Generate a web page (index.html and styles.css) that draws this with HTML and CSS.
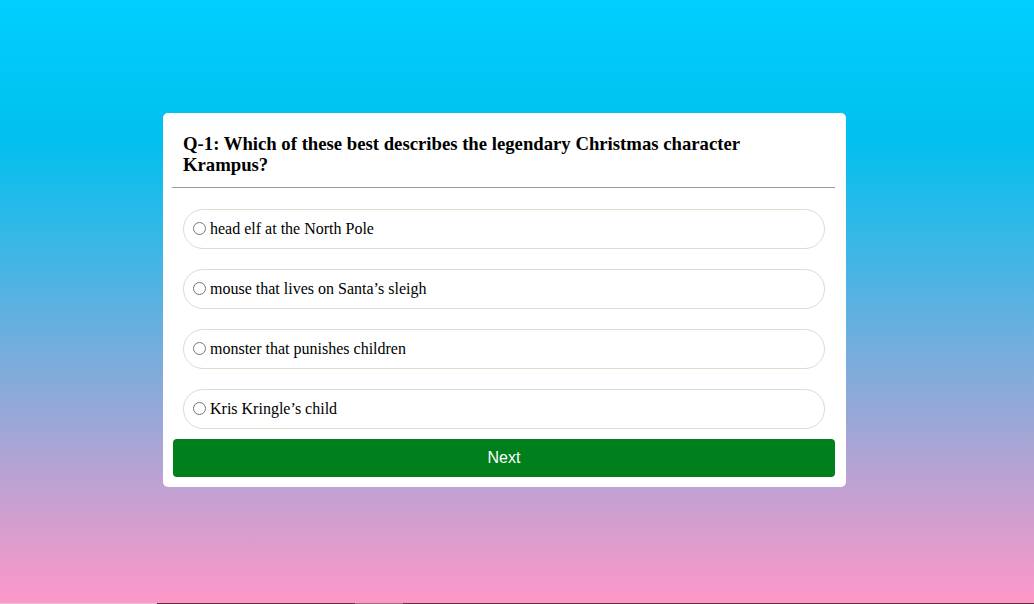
FILE: index.html
```html
<!DOCTYPE html>
<html lang="en">
<head>
<meta charset="utf-8">
<title>Quiz</title>
<link rel="stylesheet" href="styles.css">
</head>
<body>
<main class="stage">
  <section class="quiz-card">
    <div class="quiz-header">
      <h3 class="question">Q-1: Which of these best describes the legendary Christmas character Krampus?</h3>
    </div>
    <hr class="divider">
    <ul class="options">
      <li class="option"><label class="option-label"><input type="radio" name="answer" class="option-radio"><span>head elf at the North Pole</span></label></li>
      <li class="option"><label class="option-label"><input type="radio" name="answer" class="option-radio"><span>mouse that lives on Santa’s sleigh</span></label></li>
      <li class="option"><label class="option-label"><input type="radio" name="answer" class="option-radio"><span>monster that punishes children</span></label></li>
      <li class="option"><label class="option-label"><input type="radio" name="answer" class="option-radio"><span>Kris Kringle’s child</span></label></li>
    </ul>
    <button class="next-btn" type="button">Next</button>
  </section>
</main>
<div class="bottom-strip"><span class="strip-light"></span><span class="strip-dark"></span><span class="strip-mid"></span><span class="strip-dark2"></span></div>
</body>
</html>
```

FILE: styles.css
```css
html, body {
  margin: 0;
  padding: 0;
}

body {
  height: 604px;
  overflow: hidden;
  font-family: "Liberation Serif", "Times New Roman", serif;
  background: linear-gradient(to bottom, #00cfff 0%, #00c0ef 23%, #ff97c8 100%);
  display: flex;
  flex-direction: column;
}

.stage {
  flex: 1;
  padding: 113px 0 0 163px;
  box-sizing: border-box;
}

.quiz-card {
  width: 683px;
  background: #ffffff;
  border-radius: 5px;
  padding: 10px 11px 10px 10px;
  box-sizing: border-box;
}

.quiz-header {
  padding: 10px 10px 10px 10px;
}

.question {
  margin: 0;
  font-size: 18.72px;
  font-weight: bold;
  line-height: 21px;
  color: #000;
}

.divider {
  margin: 2px 0 0 -1px;
  border: 0;
  border-top: 1px solid #9a9a9a;
  height: 0;
}

.options {
  list-style: none;
  margin: 0;
  padding: 21px 10px 0 10px;
  display: flex;
  flex-direction: column;
  gap: 20px;
}

.option {
  height: 40px;
  box-sizing: border-box;
  border: 1px solid #dcdccc;
  border-radius: 20px;
  display: flex;
  align-items: center;
  padding-left: 9px;
}

.option-label {
  display: flex;
  align-items: center;
  gap: 4px;
  font-size: 16px;
  color: #000;
}

.option-radio {
  margin: -1px 0 0 0;
  width: 13px;
  height: 13px;
}

.next-btn {
  display: block;
  width: 100%;
  height: 38px;
  margin-top: 10px;
  border: 0;
  border-radius: 4px;
  background: #00801c;
  color: #ffffff;
  font-family: "Liberation Sans", Arial, sans-serif;
  font-size: 16px;
  padding: 0;
}

.bottom-strip {
  height: 1px;
  display: flex;
}

.strip-light { width: 157px; background: #d8c8d0; }
.strip-dark { width: 198px; background: #4a3a40; }
.strip-mid { width: 48px; background: #8a7a80; }
.strip-dark2 { flex: 1; background: #4a3a40; }
```
